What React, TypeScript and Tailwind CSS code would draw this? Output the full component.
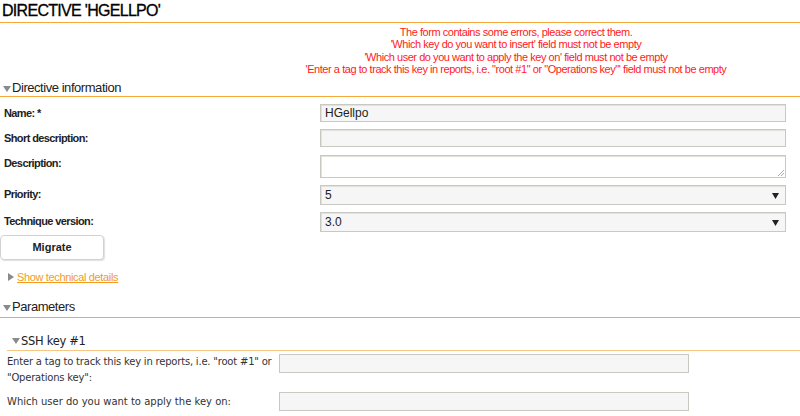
import { ReactNode } from 'react'

const orange = 'border-[#f6a93b]'

function Caret({ open = true, className = '' }: { open?: boolean; className?: string }) {
  return (
    <svg width="8" height="8" viewBox="0 0 8 8" className={className}>
      {open ? <polygon points="0,1 8,1 4,7" fill="#8a8a8a" /> : <polygon points="1,0 7,4 1,8" fill="#8a8a8a" />}
    </svg>
  )
}

function SelectArrow() {
  return (
    <svg width="7" height="6" viewBox="0 0 7 6" className="absolute right-[6px] top-[7px]">
      <polygon points="0,0 7,0 3.5,6" fill="#222" />
    </svg>
  )
}

function Row({ label, children }: { label: string; children: ReactNode }) {
  return (
    <div className="flex items-start">
      <div className="w-[320px] pl-[4px] text-[11px] font-bold tracking-[-0.6px] text-[#222] leading-[18px]">{label}</div>
      <div className="w-[466px]">{children}</div>
    </div>
  )
}

const inputCls =
  'w-full h-[18px] border border-[#c9c9c1] bg-[#f6f6f6] px-[4px] text-[12px] leading-[16px] text-[#222] shadow-[inset_1px_1px_0_#e2e2dc]'

function App() {
  return (
    <div className="w-[800px] h-[416px] overflow-hidden bg-white font-['Liberation_Sans',Arial,sans-serif] text-[#222]">
      {/* Title */}
      <div className={`h-[23px] border-b ${orange} pl-[2px] pt-[2px] text-[16px] leading-[18px] tracking-[-0.7px] text-black [-webkit-text-stroke:0.3px_black]`}>
        DIRECTIVE 'HGELLPO'
      </div>

      {/* Errors */}
      <div className="pl-[232px] pt-[3px] h-[53px] text-center text-[11px] leading-[12.3px] tracking-[-0.45px] text-[#ff1a1a]">
        <div>The form contains some errors, please correct them.</div>
        <div>'Which key do you want to insert' field must not be empty</div>
        <div>'Which user do you want to apply the key on' field must not be empty</div>
        <div>'Enter a tag to track this key in reports, i.e. "root #1" or "Operations key"' field must not be empty</div>
      </div>

      {/* Directive information */}
      <div className={`flex items-center h-[21px] border-b ${orange} pl-[3px] pt-[3px]`}>
        <Caret className="mr-[1px] mt-[2px]" />
        <span className="text-[13px] leading-[16px] tracking-[-0.45px] text-[#222]">Directive information</span>
      </div>

      <div className="flex flex-col gap-[7px] pt-[7px]">
        <Row label="Name: *">
          <div className={inputCls}>HGellpo</div>
        </Row>
        <Row label="Short description:">
          <div className={inputCls}></div>
        </Row>
        <Row label="Description:">
          <div className={`${inputCls} h-[23px] bg-white relative mt-[1px]`}>
            <svg width="6" height="6" viewBox="0 0 6 6" className="absolute right-[1px] bottom-[1px]">
              <line x1="0" y1="6" x2="6" y2="0" stroke="#aaa" />
              <line x1="3" y1="6" x2="6" y2="3" stroke="#aaa" />
            </svg>
          </div>
        </Row>
        <Row label="Priority:">
          <div className={`${inputCls} h-[20px] relative leading-[18px]`}>
            5
            <SelectArrow />
          </div>
        </Row>
        <Row label="Technique version:">
          <div className={`${inputCls} h-[20px] relative leading-[18px]`}>
            3.0
            <SelectArrow />
          </div>
        </Row>
      </div>

      <button className="mt-[3px] w-[104px] h-[25px] rounded-[4px] border border-[#d2d2d2] bg-white shadow-[1px_1px_1px_#e0e0e0] text-[11px] font-bold text-[#222]">
        Migrate
      </button>

      <div className="flex items-center pl-[7px] mt-[10px] h-[14px]">
        <Caret open={false} className="mr-[2px]" />
        <span className="text-[11px] tracking-[-0.35px] text-[#f39a1e] underline">Show technical details</span>
      </div>

      {/* Parameters */}
      <div className={`flex items-center h-[26px] mt-[8px] border-b ${orange} pl-[3px] pt-[5px]`}>
        <Caret className="mr-[1px] mt-[2px]" />
        <span className="text-[13px] leading-[16px] tracking-[-0.45px] text-[#222]">Parameters</span>
      </div>

      <div className="pl-[7px] font-['DejaVu_Sans',Verdana,sans-serif]">
        <div className="flex items-center h-[33px] pl-[5px] pt-[13px] border-b border-[#f7c683]">
          <Caret className="mr-[1px] mt-[1px]" />
          <span className="text-[11.5px] leading-[14px] tracking-[-0.3px] text-[#222]">SSH key #1</span>
        </div>
        <div className="flex items-start pt-[3px]">
          <div className="w-[272px] whitespace-nowrap text-[10px] leading-[16px] text-[#333] tracking-[-0.2px]">
            Enter a tag to track this key in reports, i.e. "root #1" or
            <br />
            "Operations key":
          </div>
          <div className="w-[410px] h-[19px] border border-[#c9c9c1] bg-[#f6f6f6]"></div>
        </div>
        <div className="flex items-center pt-[6px]">
          <div className="w-[272px] text-[10px] leading-[16px] text-[#333]">
            Which user do you want to apply the key on:
          </div>
          <div className="w-[410px] h-[19px] border border-[#c9c9c1] bg-[#f6f6f6]"></div>
        </div>
      </div>
    </div>
  )
}

export default App
